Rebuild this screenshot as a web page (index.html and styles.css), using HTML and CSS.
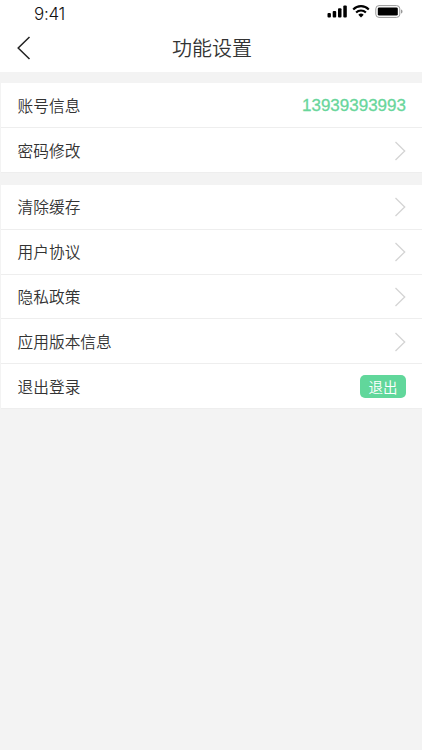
FILE: index.html
```html
<!DOCTYPE html>
<html lang="zh-CN">
<head>
<meta charset="utf-8">
<title>功能设置</title>
<link rel="stylesheet" href="styles.css">
</head>
<body>
<header class="header">
  <div class="status">
    <span class="time">9:41</span>
    <svg class="status-icons" width="76" height="16" viewBox="0 0 76 16">
      <rect x="0.5" y="9" width="3.4" height="4.5" rx="1"/>
      <rect x="5.7" y="7" width="3.5" height="6.5" rx="1"/>
      <rect x="11" y="4.3" width="3.5" height="9.2" rx="1"/>
      <rect x="16.3" y="1.5" width="3.5" height="12" rx="1"/>
      <g fill="none" stroke="#000" stroke-width="2.1">
        <path d="M26.2 5.4a11 11 0 0 1 15.6 0"/>
        <path d="M29.1 8.5a6.9 6.9 0 0 1 9.8 0"/>
      </g>
      <path d="M31.3 10.7a3.9 3.9 0 0 1 5.4 0L34 13.5z"/>
      <rect x="48.8" y="1.6" width="24" height="11.8" rx="3.2" fill="none" stroke="#999"/>
      <rect x="50.8" y="3.4" width="20" height="8.2" rx="1.4"/>
      <path d="M74 5.5c2 .6 2 3.4 0 4z" fill="#999"/>
    </svg>
  </div>
  <div class="nav">
    <svg class="back" width="14" height="24" viewBox="0 0 14 24"><path d="M12.5 1L1.2 12l11.3 11"/></svg>
    <h1>功能设置</h1>
  </div>
</header>
<main>
  <section class="group">
    <div class="row"><span>账号信息</span><span class="phone">13939393993</span></div>
    <div class="row"><span>密码修改</span><svg class="arrow" width="12" height="20" viewBox="0 0 12 20"><path d="M1.5 1l9.2 9-9.2 9"/></svg></div>
  </section>
  <section class="group">
    <div class="row"><span>清除缓存</span><svg class="arrow" width="12" height="20" viewBox="0 0 12 20"><path d="M1.5 1l9.2 9-9.2 9"/></svg></div>
    <div class="row"><span>用户协议</span><svg class="arrow" width="12" height="20" viewBox="0 0 12 20"><path d="M1.5 1l9.2 9-9.2 9"/></svg></div>
    <div class="row"><span>隐私政策</span><svg class="arrow" width="12" height="20" viewBox="0 0 12 20"><path d="M1.5 1l9.2 9-9.2 9"/></svg></div>
    <div class="row"><span>应用版本信息</span><svg class="arrow" width="12" height="20" viewBox="0 0 12 20"><path d="M1.5 1l9.2 9-9.2 9"/></svg></div>
    <div class="row"><span>退出登录</span><button class="logout">退出</button></div>
  </section>
</main>
</body>
</html>
```
FILE: styles.css
```css
* { box-sizing: border-box; }
body {
  margin: 0;
  min-height: 750px;
  background: #f3f3f3;
  color: #333;
  font-family: "Liberation Sans", "Noto Sans CJK SC", sans-serif;
}
.header { height: 72px; background: #fff; }
.status {
  display: flex;
  justify-content: space-between;
  height: 26px;
  padding: 4px 19px 0 34px;
}
.time {
  color: #111;
  font: 300 17px/20px Inter, sans-serif;
  letter-spacing: -0.3px;
}
.status-icons { display: block; }
.nav {
  display: grid;
  grid-template-columns: 41px 1fr 39px;
  align-items: center;
  height: 43px;
}
.back { margin: 0 0 0 17px; fill: none; stroke: #222; stroke-width: 1.5; }
h1 {
  margin: 0;
  font: 350 20px/30px "Noto Sans CJK SC", sans-serif;
  text-align: center;
}
.group {
  margin: 11px 0 0 1px;
  background: #fff;
}
.group + .group { margin-top: 12px; }
.row {
  display: flex;
  align-items: center;
  justify-content: space-between;
  height: 44.9px;
  padding: 1.4px 16px 0 16.6px;
  border-bottom: 1px solid #eee;
  font: 350 15.7px/24px "Noto Sans CJK SC", sans-serif;
}
.phone {
  color: #69d69b;
  font: 17px/24px "Liberation Sans", Arial, sans-serif;
  -webkit-text-stroke: 0.3px #69d69b;
  padding-top: 1px;
}
.arrow { fill: none; stroke: #d4d4d4; stroke-width: 1.3; }
.logout {
  width: 46px;
  height: 23px;
  padding: 0;
  border: 0;
  border-radius: 5px;
  background: #61d79b;
  color: #fff;
  font: 350 14.5px/23px "Noto Sans CJK SC", sans-serif;
}
```
